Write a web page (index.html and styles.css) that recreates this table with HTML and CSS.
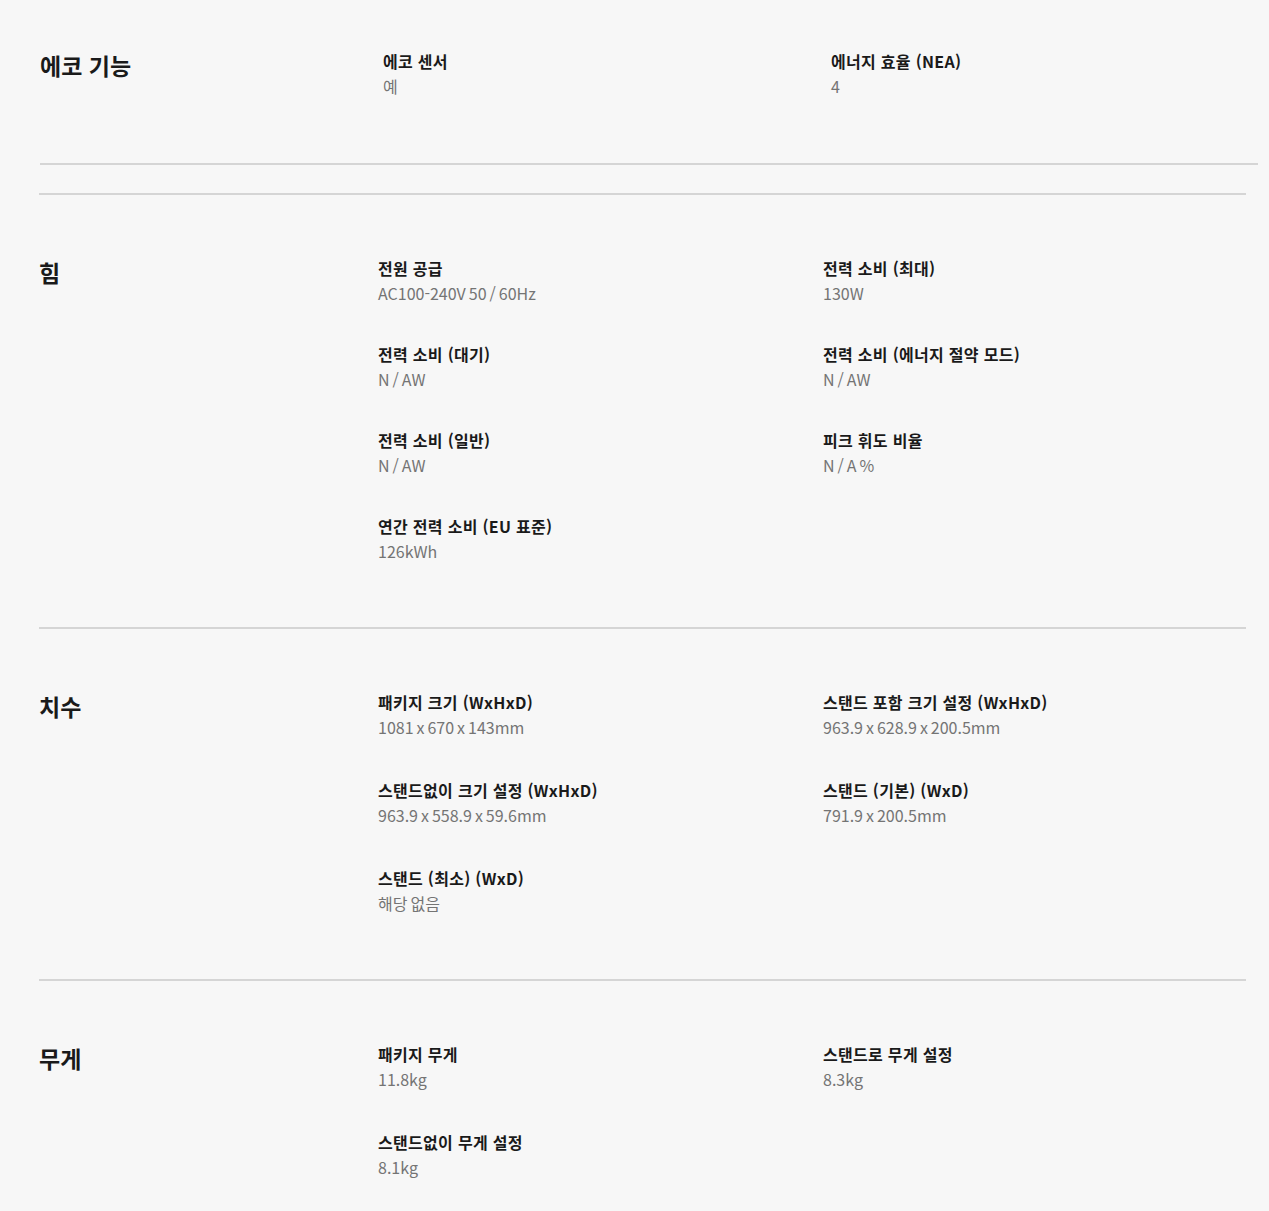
FILE: index.html
```html
<!DOCTYPE html>
<html lang="ko">
<head>
<meta charset="utf-8">
<link rel="stylesheet" href="styles.css">
</head>
<body>
<section class="spec spec--first">
  <h2 class="spec__title">에코 기능</h2>
  <div class="spec__items">
    <div class="item"><div class="item__label">에코 센서</div><div class="item__value">예</div></div>
    <div class="item"><div class="item__label">에너지 효율 (NEA)</div><div class="item__value">4</div></div>
  </div>
</section>
<div class="specs">
  <section class="spec spec--tight">
    <h2 class="spec__title">힘</h2>
    <div class="spec__items">
      <div class="item"><div class="item__label">전원 공급</div><div class="item__value">AC100-240V 50 / 60Hz</div></div>
      <div class="item"><div class="item__label">전력 소비 (최대)</div><div class="item__value">130W</div></div>
      <div class="item"><div class="item__label">전력 소비 (대기)</div><div class="item__value">N / AW</div></div>
      <div class="item"><div class="item__label">전력 소비 (에너지 절약 모드)</div><div class="item__value">N / AW</div></div>
      <div class="item"><div class="item__label">전력 소비 (일반)</div><div class="item__value">N / AW</div></div>
      <div class="item"><div class="item__label">피크 휘도 비율</div><div class="item__value">N / A %</div></div>
      <div class="item"><div class="item__label">연간 전력 소비 (EU 표준)</div><div class="item__value">126kWh</div></div>
    </div>
  </section>
  <section class="spec">
    <h2 class="spec__title">치수</h2>
    <div class="spec__items">
      <div class="item"><div class="item__label">패키지 크기 (WxHxD)</div><div class="item__value">1081 x 670 x 143mm</div></div>
      <div class="item"><div class="item__label">스탠드 포함 크기 설정 (WxHxD)</div><div class="item__value">963.9 x 628.9 x 200.5mm</div></div>
      <div class="item"><div class="item__label">스탠드없이 크기 설정 (WxHxD)</div><div class="item__value">963.9 x 558.9 x 59.6mm</div></div>
      <div class="item"><div class="item__label">스탠드 (기본) (WxD)</div><div class="item__value">791.9 x 200.5mm</div></div>
      <div class="item"><div class="item__label">스탠드 (최소) (WxD)</div><div class="item__value">해당 없음</div></div>
    </div>
  </section>
  <section class="spec">
    <h2 class="spec__title">무게</h2>
    <div class="spec__items">
      <div class="item"><div class="item__label">패키지 무게</div><div class="item__value">11.8kg</div></div>
      <div class="item"><div class="item__label">스탠드로 무게 설정</div><div class="item__value">8.3kg</div></div>
      <div class="item"><div class="item__label">스탠드없이 무게 설정</div><div class="item__value">8.1kg</div></div>
    </div>
  </section>
</div>
</body>
</html>
```

FILE: styles.css
```css
html, body {
  margin: 0;
  padding: 0;
  background: #f7f7f7;
  font-family: "Noto Sans CJK KR", "Noto Sans", sans-serif;
  color: #1a1a1a;
}

.spec {
  display: grid;
  grid-template-columns: 339px 1fr;
  padding: 61px 0 63px;
  border-top: 2px solid #d5d5d5;
}

.spec__title {
  margin: 0;
  font-size: 23px;
  line-height: 32px;
  font-weight: 700;
}

.spec__items {
  display: grid;
  grid-template-columns: 445px 1fr;
  row-gap: 38px;
}

.item__label {
  font-size: 16px;
  line-height: 25px;
  font-weight: 700;
  letter-spacing: 0.3px;
}

.item__value {
  font-size: 16px;
  line-height: 25px;
  color: #747474;
  word-spacing: -1.5px;
}

.spec--tight .spec__items {
  row-gap: 36px;
}

.spec--first {
  grid-template-columns: 343px 1fr;
  margin: 0 11px 0 40px;
  padding: 49px 0 64px;
  border-top: 0;
  border-bottom: 2px solid #d5d5d5;
}

.spec--first .spec__items {
  grid-template-columns: 448px 1fr;
}

.specs {
  margin: 28px 23px 0 39px;
}
```
